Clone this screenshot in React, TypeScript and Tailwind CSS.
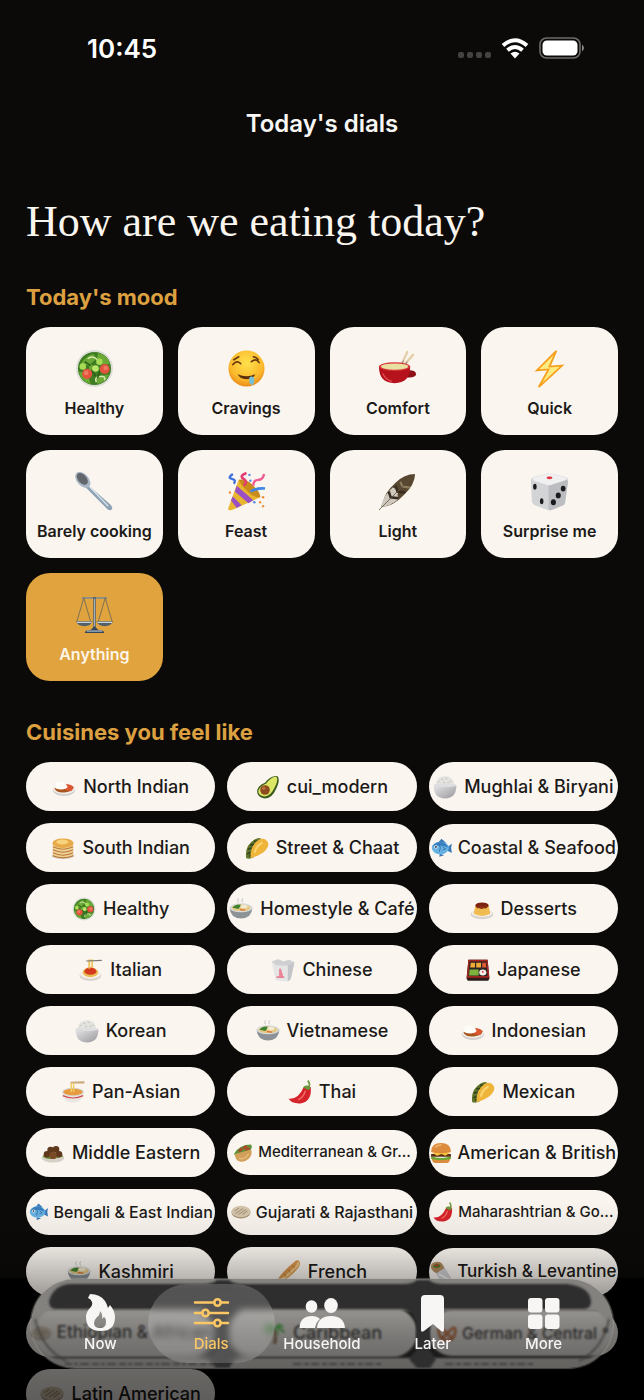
import React from 'react'
import clsx from 'clsx'

const icons: Record<string, React.ReactNode> = {
  salad: (
    <>
      <circle cx="20" cy="20" r="19" fill="#dcdfda" />
      <circle cx="20" cy="20" r="17" fill="#3f7d22" />
      <path d="M6 15q6-9 13-10l3 5-8 7zM24 4q9 2 12 11l-8 1-6-6zM4 23l9 3 3 10Q6 33 4 23zM22 29l13-3q-3 8-12 10zM14 14l6 4-5 5z" fill="#6aa935" />
      <path d="M13 10q5-4 10 1M22 34q-3-6 6-6 4 1 2 4" fill="none" stroke="#d9e8b0" strokeWidth="1.500" />
      <path d="M17 22l4 6M26 22l-3 8M16 17l-6-4" stroke="#2c5c18" strokeWidth="1.600" />
      <circle cx="12.500" cy="25.500" r="5.200" fill="#e2523c" />
      <circle cx="30.500" cy="20.500" r="5.200" fill="#e2523c" />
      <circle cx="11.500" cy="24.500" r="2.400" fill="#ee7b62" />
      <circle cx="31.500" cy="19.500" r="2.400" fill="#ee7b62" />
      <circle cx="8" cy="18" r="3.300" fill="#a9dc56" />
      <circle cx="21" cy="20" r="3.400" fill="#b9e668" />
      <circle cx="25" cy="13" r="3.300" fill="#a9dc56" />
    </>
  ),
  drool: (
    <>
      <circle cx="20" cy="20" r="18.500" fill="url(#face)" />
      <path d="M6 16q4-5 8-1M7 11l5-3M25 13q5-4 8 1M27 8q3 0 5 3" fill="none" stroke="#6b3b10" strokeWidth="1.700" strokeLinecap="round" />
      <path d="M11 26q9 4 18 0-2 5-9 5-7 0-9-5z" fill="#5c2f0c" />
      <path d="M23 29q3-2 5 1 0 6-2 7-4 0-3-8z" fill="#76bfd6" />
    </>
  ),
  fondue: (
    <>
      <path d="M25 14l5-11M28 15l8-9" stroke="#e5cfa9" strokeWidth="2.400" strokeLinecap="round" />
      <path d="M24 17l2-5M27 18l3-5" stroke="#777" strokeWidth="1" />
      <path d="M29 22q10-1 10 4 0 4-11 3z" fill="#8e0f15" />
      <path d="M1 18q0 17 16 17t16-17z" fill="#b5121b" />
      <ellipse cx="17" cy="18" rx="16" ry="4.500" fill="#d9333a" />
      <ellipse cx="17" cy="18" rx="14" ry="3.200" fill="#e8e0a0" />
      <path d="M5 25q2 6 9 8" fill="none" stroke="#e5484e" strokeWidth="1.600" />
    </>
  ),
  bolt: <path d="M27 2L7 22l12-1-10 18 24-22-13 1z" fill="#ffec80" stroke="#f7a01f" strokeWidth="1.800" />,
  spoon: (
    <>
      <path d="M13 13L36 33q4 4 1 6-3 1-6-3L11 16z" fill="#8fa2b4" />
      <path d="M14 14l20 21" stroke="#dfe8f0" strokeWidth="1.400" />
      <ellipse cx="8" cy="8" rx="9.500" ry="6" transform="rotate(48 8 8)" fill="#a9b7c4" />
      <ellipse cx="7.500" cy="7" rx="7" ry="4.300" transform="rotate(48 7.500 7)" fill="#63666a" />
    </>
  ),
  party: (
    <>
      <path d="M12 8L1 38q1 2 4 1l29-13Q26 8 12 8z" fill="#e8b52e" />
      <path d="M10 14l17 15-5 3L8 20zM6 25l9 9-5 3-6-8z" fill="#9b4fc4" />
      <path d="M12 8q8-2 16 7 7 7 6 11-6 1-13-6T12 8z" fill="#c98c1c" />
      <path d="M6 2q-6 4-1 5t2 5" fill="none" stroke="#3c71dd" strokeWidth="2.400" />
      <path d="M17 14q5-4 0-7t3-6" fill="none" stroke="#e33d74" strokeWidth="2.600" />
      <path d="M27 14q0-6 5-6t6-6" fill="none" stroke="#ef5c93" strokeWidth="2.400" />
      <path d="M24 20q7-4 15-3" fill="none" stroke="#3f87e3" strokeWidth="2.600" />
      <g fill="#4f8be8">
        <circle cx="23" cy="3" r="1.200" />
        <circle cx="24" cy="9" r="1.200" />
        <circle cx="28" cy="31" r="1.300" />
      </g>
      <g fill="#ee8d3a">
        <circle cx="37" cy="26" r="1.300" />
        <circle cx="34" cy="31" r="1.200" />
        <circle cx="37" cy="35" r="1.200" />
        <circle cx="3" cy="21" r="1.200" />
      </g>
    </>
  ),
  feather: (
    <>
      <path d="M38 2q-11 0-20 9Q7 21 5 31l-2 5q13-1 23-12Q38 13 38 2z" fill="#574730" />
      <path d="M15 16Q6 24 4 33l-1 3q10-1 18-8l-1-5 2-4z" fill="#cfc8bd" />
      <path d="M11 20l2 6 8 1M18 14l2 6 8 1" fill="none" stroke="#372d20" strokeWidth="2.600" />
      <path d="M23 10l2 5 8 1" fill="none" stroke="#8e7c5f" strokeWidth="2.200" />
      <path d="M1 39L34 6" stroke="#5d5140" strokeWidth="0.800" />
    </>
  ),
  die: (
    <>
      <path d="M20 1l16 4q3 1 3 4l-3 22q0 2-2 3l-12 5q-2 1-4 0L5 34q-2-1-3-3L1 9q0-3 3-4z" fill="#d3d4d6" />
      <path d="M20 1l17 5q1 2-1 3l-16 5L4 9Q2 7 3 6z" fill="#f0f0f1" />
      <path d="M19 14l19-6 1 2-3 21q0 2-2 3l-12 5q-2 1-3-1z" fill="#bcbdc0" />
      <ellipse cx="20" cy="6" rx="3" ry="1.500" fill="#e0313c" />
      <g fill="#1b1b1d">
        <ellipse cx="5" cy="15" rx="1.800" ry="3" />
        <ellipse cx="12" cy="30" rx="1.800" ry="3" />
        <ellipse cx="24" cy="31" rx="2.600" ry="3" />
        <ellipse cx="29" cy="24" rx="2.600" ry="3" />
        <ellipse cx="34" cy="17" rx="2.400" ry="3" />
      </g>
    </>
  ),
  scales: (
    <>
      <path d="M7 3h26" stroke="#7d8994" strokeWidth="1.600" />
      <path d="M9 3L2 27M9 3l7 24M31 3l-7 24M31 3l7 24" stroke="#6e6a55" strokeWidth="0.900" />
      <path d="M20 2v34" stroke="#56636d" strokeWidth="2.600" />
      <path d="M20 4v30" stroke="#b7c5cf" strokeWidth="0.800" />
      <path d="M1 27h17q-2 5-8.500 5T1 27zM22 27h17q-2 5-8.500 5T22 27z" fill="#53606a" />
      <path d="M2 28h15M23 28h15" stroke="#c6d1d9" strokeWidth="1.200" />
      <path d="M10 39q0-3 6-3l4-4 4 4q6 0 6 3z" fill="#33475a" />
      <path d="M12 37h16" stroke="#b3c3ce" strokeWidth="1.200" />
    </>
  ),
  curry: (
    <>
      <ellipse cx="20" cy="25" rx="19" ry="10" fill="#d0cecc" />
      <ellipse cx="20" cy="23" rx="18.500" ry="9" fill="#f1ede8" />
      <path d="M4 22q3 8 17 7 14-1 15-8-6-6-15-5z" fill="#a8551d" />
      <path d="M21 16q10-2 15 4l-4 7-10-2z" fill="#dc5632" />
      <path d="M4 20q2-9 10-9t12 9q-2 4-11 4T4 20z" fill="#fdfcf8" />
    </>
  ),
  avocado: (
    <>
      <path d="M36 2q5 7-3 22-6 15-19 15Q1 37 2 26q1-8 13-13Q25 0 36 2z" fill="#3d5a1c" />
      <path d="M34 3q4 5-3 18-6 14-17 15Q3 34 4 26q2-7 13-12Q27 1 34 3z" fill="#dbe566" />
      <circle cx="15" cy="25" r="8" fill="#8c4a1f" />
      <circle cx="13" cy="22" r="3" fill="#b7713e" />
    </>
  ),
  rice: (
    <>
      <path d="M4 17Q6 2 20 2t16 15z" fill="#e4e3df" />
      <path d="M8 12l3-2M14 7l3 1M21 5l3 1M28 10l3 1M17 13l3-1M24 13l3-1" stroke="#bdbbb5" strokeWidth="1.500" />
      <path d="M1 17q0 22 19 22t19-22z" fill="url(#bowl)" />
      <ellipse cx="20" cy="17" rx="19" ry="3" fill="#dedee0" />
    </>
  ),
  pancakes: (
    <>
      <ellipse cx="20" cy="33" rx="19" ry="5" fill="#ccc6bf" />
      <path d="M3 12v20q17 9 34 0V12z" fill="#eed09a" />
      <path d="M3 18q17 8 34 0M3 23q17 8 34 0M3 28q17 8 34 0M3 33q17 7 34 0" fill="none" stroke="#bb7a33" strokeWidth="1.800" />
      <ellipse cx="20" cy="12" rx="17.500" ry="8" fill="#e8a948" />
      <ellipse cx="19" cy="10" rx="10" ry="4" fill="#f8d37d" />
    </>
  ),
  taco: (
    <>
      <path d="M2 37Q-1 16 16 6q8-5 13 0L14 36q-6 3-12 1z" fill="#63742c" />
      <path d="M4 30l5-3M5 22l6-2M9 15l6-1M15 9l6 0M7 34l6-3" stroke="#30451b" strokeWidth="3" />
      <path d="M9 37Q9 14 24 6q9-4 14 4 3 7-4 14-8 8-25 13z" fill="#efb53b" />
      <path d="M16 28q3-12 13-17" fill="none" stroke="#fbd775" strokeWidth="3" />
    </>
  ),
  fish: (
    <>
      <path d="M28 20l10-8q-3 9 0 17l-10-5zM14 9l5-6 9 8zM16 30l-1 6 9-3z" fill="#3b78b8" />
      <ellipse cx="17" cy="20" rx="15.500" ry="11.500" fill="#67b2e3" />
      <path d="M3 17Q9 8 18 9q10 1 13 10-14-6-28-2z" fill="#3a7fc0" />
      <circle cx="9" cy="18" r="3" fill="#fff" />
      <circle cx="9" cy="18" r="1.700" fill="#16202c" />
      <path d="M15 13q4 7 0 14M21 17l5 5M21 24l6-3" fill="none" stroke="#2c5f94" strokeWidth="1.300" />
    </>
  ),
  noodles: (
    <>
      <path d="M16 9q-3-3 0-7M23 9q-3-3 0-7" fill="none" stroke="#cfcfcf" strokeWidth="1.800" />
      <path d="M1 18q1 17 19 18 18-1 19-18z" fill="#8c9296" />
      <ellipse cx="20" cy="18" rx="19" ry="7.500" fill="#d8dcdc" />
      <ellipse cx="20" cy="18" rx="16" ry="5.500" fill="#e5c983" />
      <path d="M6 18q5-7 14-5l-4 7z" fill="#3e8231" />
      <ellipse cx="25" cy="16" rx="6" ry="3" fill="#f3e8cf" />
      <path d="M18 21l9 1" stroke="#d8702e" strokeWidth="2" />
    </>
  ),
  custard: (
    <>
      <ellipse cx="20" cy="29" rx="19" ry="8" fill="#d7d2ce" />
      <ellipse cx="20" cy="27" rx="17" ry="6" fill="#f5f1ed" />
      <path d="M9 14h22l3 14q-14 7-28 0z" fill="#f0bc52" />
      <ellipse cx="20" cy="14" rx="11" ry="5" fill="#7b2412" />
      <path d="M10 16q3 6 5 1 5 6 8 0 4 5 7-2" fill="#8d3113" />
    </>
  ),
  spaghetti: (
    <>
      <ellipse cx="19" cy="29" rx="18" ry="9" fill="#d6d1cb" />
      <ellipse cx="19" cy="27" rx="17" ry="8" fill="#f5f0e7" />
      <ellipse cx="19" cy="24" rx="13" ry="8" fill="#e9bd53" />
      <ellipse cx="19" cy="22" rx="10" ry="6" fill="#d53a1d" />
      <path d="M17 18V4h5v12" fill="none" stroke="#edc35a" strokeWidth="3" />
      <path d="M12 5l26-1" stroke="#777" strokeWidth="2" />
    </>
  ),
  takeout: (
    <>
      <path d="M1 6l7 31 20 2 5-4 6-28-9-4-9 3-9-4z" fill="#e5e5e6" />
      <path d="M1 6l8 6 19 1 11-6-9-4-9 3-9-4z" fill="#cfd0d2" />
      <path d="M28 13l11-6-6 28-5 4z" fill="#c3c4c7" />
      <path d="M9 32h13M15 31V18l2 6 2 8" fill="none" stroke="#ea8196" strokeWidth="3" />
    </>
  ),
  bento: (
    <>
      <path d="M4 3h32l3 31-2 4H3l-2-4z" fill="#2c1b18" />
      <path d="M4 3h32l3 30H1z" fill="#a32620" />
      <path d="M6 6h28l2 24H4z" fill="#2b2321" />
      <path d="M8 8h7v8H7zM17 8h8v8h-8z" fill="#efaa3a" />
      <path d="M27 8h6l1 8h-7z" fill="#dd5a34" />
      <path d="M6 19h15v10H5z" fill="#7db33d" />
      <ellipse cx="28" cy="24" rx="6" ry="5" fill="#f3eee8" />
      <circle cx="28" cy="23" r="1.500" fill="#d52a3a" />
    </>
  ),
  ramen: (
    <>
      <path d="M16 3l23-1v4H16z" fill="#c9a97a" />
      <path d="M2 20q1 18 18 18t18-18z" fill="#ebe7e4" />
      <path d="M3 26q17 8 34 0" fill="none" stroke="#cf4a47" strokeWidth="2" />
      <ellipse cx="20" cy="20" rx="18" ry="7" fill="#d7d2cd" />
      <ellipse cx="20" cy="20" rx="16" ry="5.500" fill="#e89b3d" />
      <path d="M17 20V5M21 20V5" stroke="#f0cd68" strokeWidth="2.500" />
    </>
  ),
  chili: (
    <>
      <path d="M34 13q4-6-1-12" fill="none" stroke="#6b9c3e" strokeWidth="3" />
      <path d="M26 12q5-5 12 0 2 24-17 27Q6 40 1 31q16 2 25-19z" fill="#d6222a" />
      <path d="M25 12q6-6 13 1l-4 4-4-2z" fill="#69983c" />
      <path d="M29 18q-3 11-12 15" fill="none" stroke="#f26a63" strokeWidth="2.500" />
    </>
  ),
  falafel: (
    <>
      <ellipse cx="20" cy="28" rx="19" ry="8" fill="#d6d0c6" />
      <path d="M3 26q8 8 34 0l-4-6H7z" fill="#6a8e3a" />
      <g fill="#60391d">
        <circle cx="10" cy="22" r="5.500" />
        <circle cx="30" cy="22" r="5.500" />
        <circle cx="16" cy="15" r="5.500" />
        <circle cx="25" cy="14" r="5.500" />
      </g>
      <circle cx="20" cy="24" r="6" fill="#7b4b27" />
    </>
  ),
  pita: (
    <>
      <path d="M2 22Q12 3 36 3q4 4-2 14L10 33z" fill="#5b9236" />
      <path d="M12 17l6-6M20 11l8-5M25 14l8-4" stroke="#b4432b" strokeWidth="5" />
      <path d="M4 22l32-9q4 10-4 18t-18 6Q4 35 4 22z" fill="#d3a05a" />
      <path d="M12 31q12 3 19-9" fill="none" stroke="#e7c284" strokeWidth="2.500" />
    </>
  ),
  burger: (
    <>
      <path d="M3 29h34q-1 9-7 9H10q-6 0-7-9z" fill="#d98d3d" />
      <path d="M2 26q18 6 36 0v5q-18 4-36 0z" fill="#69a736" />
      <path d="M2 22h36v5H2z" fill="#5d2d17" />
      <path d="M3 19h34l-9 6-7-3-8 3z" fill="#f8c739" />
      <path d="M2 18Q2 2 20 2t18 16q-18 5-36 0z" fill="#dc8b3c" />
      <path d="M9 10q5-5 12-5" fill="none" stroke="#efb371" strokeWidth="3" />
    </>
  ),
  flatbread: (
    <>
      <ellipse cx="20" cy="21" rx="19" ry="12" fill="#a8957b" />
      <ellipse cx="20" cy="19" rx="19" ry="11.500" fill="#d4c5ac" />
      <path d="M9 23l15-10M15 25l15-10M7 18l9-6M23 25l10-7" stroke="#a38d6f" strokeWidth="2" />
    </>
  ),
  baguette: (
    <>
      <path d="M36 1q6 5-3 15Q19 32 5 37q-6-3-1-9Q17 12 28 4q4-5 8-3z" fill="#d9964a" />
      <path d="M34 4q4 3-6 11Q16 28 6 34" fill="none" stroke="#f0c584" strokeWidth="4" />
      <path d="M26 9l3 5M19 16l3 5M12 23l3 5" stroke="#b97631" strokeWidth="1.600" />
      <path d="M1 38q19-4 38 1" stroke="#6fa243" strokeWidth="3" />
    </>
  ),
  wrap: (
    <>
      <path d="M6 16l17-10 15 24q2 3-2 5-8 3-16 2z" fill="#cfcfd2" />
      <path d="M2 13q-2-9 8-11 10-2 13 5l3 6-14 9q-7-2-10-9z" fill="#b08b5c" />
      <path d="M5 10q3-6 9-5t5 5q-7 6-14 0z" fill="#567a31" />
      <path d="M9 9l6-2" stroke="#c23c22" strokeWidth="3" />
      <path d="M16 24l18 9" stroke="#f3f3f5" strokeWidth="3" />
    </>
  ),
  palm: (
    <>
      <path d="M19 14q3 12-1 24h6q2-14-1-24z" fill="#8a5f35" />
      <path d="M21 13Q10-3 3 12q5-2 8 0-8 1-8 10 7-6 18-9zM21 13Q27-3 38 11q-5-2-8 1 8 0 8 10-6-7-17-9zM21 13q-9 4-8 13 3-7 8-13zM21 13q9 4 8 13-3-7-8-13z" fill="#49c53f" />
    </>
  ),
  pretzel: (
    <path d="M9 32l20-20q8-6 8 4-2 19-17 19T3 16q0-10 8-4l20 20" fill="none" stroke="#c95f22" strokeWidth="5.500" />
  ),
}

const Icon = ({ name, className }: { name: string; className: string }) => (
  <svg viewBox="0 0 40 40" className={clsx('shrink-0', className)} aria-hidden="true">
    {icons[name]}
  </svg>
)

const moods = [
  { label: 'Healthy', icon: 'salad' },
  { label: 'Cravings', icon: 'drool' },
  { label: 'Comfort', icon: 'fondue' },
  { label: 'Quick', icon: 'bolt' },
  { label: 'Barely cooking', icon: 'spoon' },
  { label: 'Feast', icon: 'party' },
  { label: 'Light', icon: 'feather' },
  { label: 'Surprise me', icon: 'die' },
  { label: 'Anything', icon: 'scales' },
]

type Size = 'lg' | 'md' | 'tight' | 'sm' | 'xs'

const cuisines: { label: string; icon: string; size?: Size }[] = [
  { label: 'North Indian', icon: 'curry' },
  { label: 'cui_modern', icon: 'avocado' },
  { label: 'Mughlai & Biryani', icon: 'rice' },
  { label: 'South Indian', icon: 'pancakes' },
  { label: 'Street & Chaat', icon: 'taco' },
  { label: 'Coastal & Seafood', icon: 'fish', size: 'md' },
  { label: 'Healthy', icon: 'salad' },
  { label: 'Homestyle & Café', icon: 'noodles' },
  { label: 'Desserts', icon: 'custard' },
  { label: 'Italian', icon: 'spaghetti' },
  { label: 'Chinese', icon: 'takeout' },
  { label: 'Japanese', icon: 'bento' },
  { label: 'Korean', icon: 'rice' },
  { label: 'Vietnamese', icon: 'noodles' },
  { label: 'Indonesian', icon: 'curry' },
  { label: 'Pan-Asian', icon: 'ramen' },
  { label: 'Thai', icon: 'chili' },
  { label: 'Mexican', icon: 'taco' },
  { label: 'Middle Eastern', icon: 'falafel' },
  { label: 'Mediterranean & Gr...', icon: 'pita', size: 'xs' },
  { label: 'American & British', icon: 'burger', size: 'md' },
  { label: 'Bengali & East Indian', icon: 'fish', size: 'sm' },
  { label: 'Gujarati & Rajasthani', icon: 'flatbread', size: 'sm' },
  { label: 'Maharashtrian & Go...', icon: 'chili', size: 'xs' },
  { label: 'Kashmiri', icon: 'noodles' },
  { label: 'French', icon: 'baguette' },
  { label: 'Turkish & Levantine', icon: 'wrap', size: 'tight' },
  { label: 'Ethiopian & African', icon: 'flatbread', size: 'tight' },
  { label: 'Caribbean', icon: 'palm' },
  { label: 'German & Central *', icon: 'pretzel', size: 'sm' },
  { label: 'Latin American', icon: 'flatbread' },
]

const pillSizes: Record<Size, string> = {
  lg: 'h-[49px] gap-[7px] text-[18px]',
  md: 'h-[48px] gap-[5px] text-[18px]',
  tight: 'h-[48px] gap-[5px] text-[17px]',
  sm: 'h-[46px] gap-[5px] text-[16px]',
  xs: 'h-[45px] gap-[5px] text-[15px]',
}

const pillIcons: Record<Size, string> = {
  lg: 'size-[24px]',
  md: 'size-[22px]',
  tight: 'size-[22px]',
  sm: 'size-[20px]',
  xs: 'size-[20px]',
}

const tabs = [
  {
    label: 'Now',
    icon: (
      <path
        fillRule="evenodd"
        d="M8 0q10 0 15 7 2 3 3 7l2-3q5 6 5 12 0 14-14 14Q4 37 4 23q0-5 4-9 3-3 2-6-1-3-4-4zM18 17q0 4-3 6-3 3-3 6 0 5 6 5t6-6q0-4-2-5l-2 2q1-5-2-8z"
        fill="currentColor"
      />
    ),
  },
  {
    label: 'Dials',
    icon: (
      <g fill="none" stroke="currentColor" strokeWidth="2.600" strokeLinecap="round">
        <path d="M2 8.500h19M28 8.500h7M2 19h7M16 19h19M2 29h19M28 29h7" />
        <circle cx="24.500" cy="8.500" r="3.200" />
        <circle cx="12.500" cy="19" r="3.200" />
        <circle cx="24.500" cy="29" r="3.200" />
      </g>
    ),
  },
  {
    label: 'Household',
    icon: (
      <g fill="currentColor">
        <ellipse cx="7.500" cy="12.500" rx="5.800" ry="6.200" />
        <ellipse cx="27" cy="11.500" rx="6.800" ry="7.500" />
        <path d="M-4.500 34Q-4 22 8 22q5 0 8 3-4 3-5 9zM13 34q1-12 14-12t14 12z" />
      </g>
    ),
  },
  {
    label: 'Later',
    icon: <path d="M6 5q0-4 4-4h15q4 0 4 4v31q0 3-3 1l-8-7-9 7q-3 2-3-1z" fill="currentColor" />,
  },
  {
    label: 'More',
    icon: (
      <g fill="currentColor">
        <rect x="2" y="4" width="14.500" height="14.500" rx="3" />
        <rect x="19" y="4" width="14.500" height="14.500" rx="3" />
        <rect x="2" y="20.500" width="14.500" height="14.500" rx="3" />
        <rect x="19" y="20.500" width="14.500" height="14.500" rx="3" />
      </g>
    ),
  },
]

const StatusBar = () => (
  <div className="flex h-24 items-center justify-between pr-[59px] pl-[87px]">
    <span className="text-[26px] font-semibold text-white">10:45</span>
    <div className="flex items-center gap-[10px]">
      <svg viewBox="0 0 33 21" className="h-[21px] w-[33px]" fill="#434342" aria-hidden="true">
        <rect x="0" y="14" width="6" height="6" rx="2" />
        <rect x="9" y="14" width="6" height="6" rx="2" />
        <rect x="18" y="14" width="6" height="6" rx="2" />
        <rect x="27" y="14" width="6" height="6" rx="2" />
      </svg>
      <svg viewBox="0 0 28 21" className="h-[21px] w-[28px]" fill="none" stroke="#fff" strokeWidth="4" aria-hidden="true">
        <path d="M2 7.500Q14-3 26 7.500M6.500 12.200q7.500-6.400 15 0" />
        <path d="M14 20.500l-4.500-5q4.500-3.500 9 0z" fill="#fff" stroke="none" />
      </svg>
      <svg viewBox="0 0 46 22" className="h-[22px] w-[46px]" aria-hidden="true">
        <rect x="1" y="1" width="40" height="20" rx="6.500" fill="none" stroke="#6b6b6b" strokeWidth="1.600" />
        <rect x="3.500" y="3.500" width="35" height="15" rx="4.500" fill="#fff" />
        <path d="M43 7.500q4 3.500 0 7z" fill="#8a8a8a" />
      </svg>
    </div>
  </div>
)

const SectionTitle = ({ children }: { children: React.ReactNode }) => (
  <h3 className="text-[22px] leading-7 font-bold text-[#dda041]">{children}</h3>
)

const TabBar = () => (
  <nav className="absolute inset-x-[31px] bottom-8 z-20 h-[89px] rounded-full shadow-[0_0_1px_1px_rgba(170,167,163,0.45)]">
    <div className="absolute inset-0 overflow-hidden rounded-full bg-white/12 backdrop-blur-[1px]">
      <svg viewBox="0 0 582 89" preserveAspectRatio="none" className="size-full" aria-hidden="true">
        <defs>
          <linearGradient id="shade" x1="0" y1="0" x2="0" y2="1">
            <stop offset="0" stopColor="#000" stopOpacity="0" />
            <stop offset="1" stopColor="#000" stopOpacity="0.180" />
          </linearGradient>
          <filter id="soft" x="-5%" y="-20%" width="110%" height="140%">
            <feGaussianBlur stdDeviation="1.300" />
          </filter>
        </defs>
        <g filter="url(#soft)">
          <path d="M-6-6h594v38H-6z" fill="#84827f" />
          <path d="M-6 28h30Q8 34 2 52h-8zM588 28h-30q16 6 22 24h8z" fill="#84827f" />
          <path d="M-6 82V58h7q8 16 23 21h534q15-5 23-21h7v37H-6z" fill="#7a7875" />
        </g>
        <path d="M0 32h582v57H0z" fill="url(#shade)" />
        <path
          filter="url(#soft)"
          fill="#2e2e2e"
          d="M38 5H172q10 0 14-4h12q4 4 14 4h160q10 0 14-4h12q4 4 14 4h124q24 3 24 18 0 7-7 7H413q-12 2-14 14v28l6 8-6 9h-13l-8-9 7-8V44q-2-12-14-14H212q-12 2-14 14v28l6 8-6 9h-13l-8-9 7-8V44q-2-12-14-14H25q-7 0-7-8Q22 7 38 5z"
        />
        <g filter="url(#soft)" fill="none" stroke="#3f3e3c" strokeWidth="2.200">
          <path d="M34 85h148" strokeDasharray="7 2 4 2 9 3" />
          <path d="M262 85h90M414 85h88" strokeDasharray="8 3 5 2" />
          <path d="M4 40q8 32 32 42M578 40q-6 30-30 42" strokeWidth="1.500" />
        </g>
      </svg>
    </div>
    <ul className="relative grid h-full grid-cols-5 px-[14px]">
      {tabs.map(({ label, icon }) => {
        const active = label === 'Dials'
        return (
          <li key={label} className="relative">
            {active && <span className="absolute inset-x-[-8px] inset-y-[5px] rounded-full bg-white/18 backdrop-blur-[3px]" />}
            <a
              href={`#${label.toLowerCase()}`}
              aria-current={active ? 'page' : undefined}
              className={clsx(
                'relative flex h-full flex-col items-center pt-[15px] text-[15px] leading-5 font-medium',
                active ? 'text-[#fbc765]' : 'text-[#f7f6f5]',
              )}
            >
              <svg viewBox="0 0 36 40" className="h-[40px] w-[36px] overflow-visible" aria-hidden="true">
                {icon}
              </svg>
              {label}
            </a>
          </li>
        )
      })}
    </ul>
  </nav>
)

const App = () => {
  return (
    <div className="relative h-screen overflow-hidden bg-[#0b0a08] font-['Inter',sans-serif]">
      <svg className="absolute size-0" aria-hidden="true">
        <defs>
          <radialGradient id="face" cx="0.500" cy="0.350" r="0.650">
            <stop offset="0" stopColor="#ffe24d" />
            <stop offset="0.700" stopColor="#fbb92c" />
            <stop offset="1" stopColor="#ea8a1c" />
          </radialGradient>
          <linearGradient id="bowl" x1="0" y1="0" x2="1" y2="1">
            <stop offset="0" stopColor="#e6e6e8" />
            <stop offset="1" stopColor="#98989c" />
          </linearGradient>
        </defs>
      </svg>
      <div className="absolute inset-x-0 bottom-0 h-[122px] bg-black" />

      <div className="relative h-full overflow-y-auto [scrollbar-width:none]">
        <StatusBar />
        <header className="flex h-14 items-center justify-center">
          <h1 className="text-[24px] font-semibold text-[#f8f7f5]">Today's dials</h1>
        </header>

        <main className="px-[26px] pt-[44px]">
          <h2 className="font-['Liberation_Serif',serif] text-[44px] leading-[52px] text-[#faf6ef]">How are we eating today?</h2>

          <section className="mt-[35px]">
            <SectionTitle>Today's mood</SectionTitle>
            <div className="mt-4 grid grid-cols-4 gap-[15px]">
              {moods.map(({ label, icon }) => {
                const active = label === 'Anything'
                return (
                  <button
                    key={label}
                    type="button"
                    aria-pressed={active}
                    className={clsx(
                      'flex h-[108px] flex-col items-center gap-[10px] rounded-3xl pt-[22px] text-[16px] leading-5 font-semibold whitespace-nowrap',
                      active ? 'bg-[#e0a33e] text-[#fdf6e8]' : 'bg-[#faf5ef] text-[#1c1a18]',
                    )}
                  >
                    <Icon name={icon} className="size-[39px]" />
                    {label}
                  </button>
                )
              })}
            </div>
          </section>

          <section className="mt-[37px]">
            <SectionTitle>Cuisines you feel like</SectionTitle>
            <div className="mt-4 grid grid-cols-3 items-center gap-3">
              {cuisines.map(({ label, icon, size = 'lg' }) => (
                <button
                  key={label}
                  type="button"
                  className={clsx(
                    'flex items-center justify-center overflow-hidden rounded-full bg-[#faf5ef] font-medium whitespace-nowrap text-[#1c1a18]',
                    pillSizes[size],
                  )}
                >
                  <Icon name={icon} className={pillIcons[size]} />
                  {label}
                </button>
              ))}
            </div>
          </section>
        </main>
      </div>

      {/* fade under the tab bar */}
      <div className="pointer-events-none absolute inset-x-0 bottom-0 z-10 h-[200px] bg-[linear-gradient(to_bottom,transparent_0%,rgba(0,0,0,0.08)_24%,rgba(0,0,0,0.27)_40%,rgba(0,0,0,0.46)_54%,rgba(0,0,0,0.53)_68%,rgba(0,0,0,0.62)_100%)]" />
      <TabBar />
    </div>
  )
}

export default App
